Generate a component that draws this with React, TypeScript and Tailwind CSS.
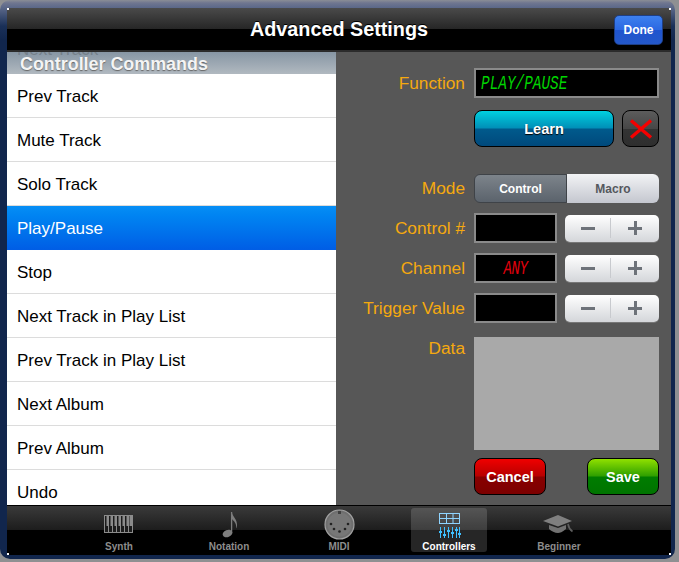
const commands = [
  "Prev Track",
  "Mute Track",
  "Solo Track",
  "Play/Pause",
  "Stop",
  "Next Track in Play List",
  "Prev Track in Play List",
  "Next Album",
  "Prev Album",
  "Undo",
];

const sans = "font-['Liberation_Sans',Arial,sans-serif]";
const lcd = "font-['Liberation_Mono',monospace]";

const Label = ({ children }: { children: string }) => (
  <div className="w-[129px] shrink-0 text-right text-[17.3px] leading-none text-[#f5a90f]">
    {children}
  </div>
);

const Stepper = () => (
  <div className="ml-2 flex h-[27px] w-[94px] items-center rounded-[5px] bg-gradient-to-b from-white to-[#d4d6da] shadow-[0_1px_0_#777]">
    <div className="flex h-[20px] w-[46px] items-center justify-center border-r border-[#c8cace]">
      <div className="h-[3px] w-[14px] bg-[#6d7279]" />
    </div>
    <div className="relative flex h-[20px] flex-1 items-center justify-center">
      <div className="h-[3px] w-[14px] bg-[#6d7279]" />
      <div className="absolute h-[14px] w-[3px] bg-[#6d7279]" />
    </div>
  </div>
);

const NumberRow = ({ label, value }: { label: string; value?: string }) => (
  <div className="flex h-[30px] items-center">
    <div className="pt-[2px]">
      <Label>{label}</Label>
    </div>
    <div className="ml-[9px] flex h-[30px] w-[83px] items-center justify-center border-2 border-[#8a8a8a] bg-black">
      {value && (
        <span
          className={`${lcd} inline-block scale-y-[1.45] text-[14px] italic tracking-[-0.4px] text-[#e0000c]`}
        >
          {value}
        </span>
      )}
    </div>
    <Stepper />
  </div>
);

const KeyboardIcon = () => (
  <svg width="30" height="20" viewBox="0 0 30 20" fill="none">
    <rect x="0.5" y="0.5" width="28" height="17" fill="#1c1c1c" stroke="#8b8b8b" />
    {[4, 8, 12, 16, 20, 24].map((x) => (
      <line key={x} x1={x + 0.5} y1="11" x2={x + 0.5} y2="18" stroke="#8b8b8b" />
    ))}
    {[2, 6, 10, 14, 18, 22, 25].map((x) => (
      <rect key={x} x={x + 0.5} y="1" width="2.5" height="10" fill="#8b8b8b" />
    ))}
  </svg>
);

const NoteIcon = () => (
  <svg width="18" height="27" viewBox="-2 0 18 27" fill="none">
    <ellipse cx="5.5" cy="22.5" rx="5" ry="3.6" transform="rotate(-22 5.5 22.5)" fill="#7d7d7d" />
    <path d="M9.6 22V1" stroke="#7d7d7d" strokeWidth="1.3" />
    <path d="M9.8 1C10.5 6 15.5 8 15 15C14.9 16 14.6 17 14.2 17.6C14.8 12.5 12 10 9.8 8Z" fill="#7d7d7d" />
  </svg>
);

const MidiIcon = () => (
  <svg width="31" height="31" viewBox="0 0 31 31" fill="none">
    <circle cx="15.5" cy="15.5" r="14.5" fill="#6f6f6f" stroke="#a2a2a2" strokeWidth="1.2" />
    <circle cx="15.5" cy="15.5" r="12" fill="#777" />
    <rect x="14" y="2" width="3" height="3" fill="#3f3f3f" />
    {[
      [7, 15],
      [10, 20],
      [15.5, 22.5],
      [21, 20],
      [24, 15],
    ].map(([cx, cy]) => (
      <circle key={cx} cx={cx} cy={cy} r="1.3" fill="#222" />
    ))}
  </svg>
);

const ControllersIcon = () => (
  <svg width="23" height="26" viewBox="0 0 23 26" fill="none">
    <g stroke="#8fd4ff">
      <rect x="1.5" y="1.5" width="20" height="10" />
      <path d="M8.5 1.5V11.5M15 1.5V11.5M1.5 6.5H21.5" />
    </g>
    <g stroke="#3fc0ff" strokeWidth="1">
      {[2.5, 6.5, 10.5, 14.5, 18.5, 21.5].map((x) => (
        <line key={x} x1={x} y1="15" x2={x} y2="26" />
      ))}
    </g>
    <g fill="#3fc0ff">
      {[
        [2.5, 19],
        [6.5, 22],
        [10.5, 18],
        [14.5, 20],
        [18.5, 17],
        [21.5, 21],
      ].map(([x, y]) => (
        <rect key={x} x={x - 1.5} y={y} width="3" height="2" />
      ))}
    </g>
  </svg>
);

const CapIcon = () => (
  <svg width="32" height="19" viewBox="0 0 32 19" fill="none">
    <path d="M15 0L29 6L15 11.5L0 6Z" fill="#7f7f7f" />
    <path d="M6 10L15 13L23 10V14C19 17 17 18 15 18C12 18 8 16 6 14Z" fill="#727272" />
    <path d="M25 9C25.5 12 26 14 29.5 16.5" stroke="#5e5e5e" strokeWidth="1.6" />
  </svg>
);

const tabs = [
  { name: "Synth", icon: <KeyboardIcon /> },
  { name: "Notation", icon: <NoteIcon /> },
  { name: "MIDI", icon: <MidiIcon /> },
  { name: "Controllers", icon: <ControllersIcon />, active: true },
  { name: "Beginner", icon: <CapIcon /> },
];

export default function App() {
  return (
    <div className={`${sans} h-[562px] w-[679px] overflow-hidden bg-[#8f9092]`}>
      <div className="h-[559px] w-[675px] rounded-[10px] bg-[linear-gradient(#8a8d95,#6f7690_3px,#5a6788_8px,#1a3058_26px,#11264d_40px)] pb-[4px] pl-[7px] pr-[4px] pt-[8px]">
        <div className="relative flex h-full flex-col">
          {/* little white corner marks of the popover */}
          <div className="absolute left-0 top-0 z-10 h-[2px] w-[2px] bg-white" />
          <div className="absolute right-0 top-0 z-10 h-[2px] w-[2px] bg-white" />
          <div className="absolute bottom-0 left-0 z-10 h-[2px] w-[2px] bg-white" />
          <div className="absolute bottom-0 right-0 z-10 h-[2px] w-[2px] bg-white" />

          {/* title bar */}
          <div className="relative flex h-[44px] shrink-0 items-center justify-center border-b-2 border-[#2b2b2b] bg-[linear-gradient(#4a4a4a,#262626_50%,#000_50%,#000)] pt-[2px]">
            <h1 className="text-[19.8px] font-bold text-white [text-shadow:0_-1px_0_#000]">
              Advanced Settings
            </h1>
            <button className="absolute right-[8px] top-[7px] flex h-[30px] w-[49px] items-center justify-center rounded-[5px] border border-[#1e3f86] bg-[linear-gradient(#3d80ee,#2b68e2_50%,#1f54cf_50%,#2458c9)] text-[12px] font-bold text-white">
              Done
            </button>
          </div>

          <div className="flex min-h-0 flex-1">
            {/* command list */}
            <div className="w-[329px] shrink-0 bg-white">
              <div className="relative h-[22px] overflow-hidden bg-gradient-to-b from-[#8796a4] to-[#b1b9c0] pl-[13px] text-[17.9px] font-bold leading-[25px] text-[#f4f4f4] [text-shadow:0_1px_1px_#666]">
                <span className="absolute left-[10px] top-[-15px] text-[17px] font-normal text-[#75808a] [text-shadow:none]">
                  Next Track
                </span>
                <span className="relative">Controller Commands</span>
              </div>
              {commands.map((c) =>
                c === "Play/Pause" ? (
                  <div
                    key={c}
                    className="flex h-[44px] items-center bg-gradient-to-b from-[#068ef5] to-[#015de5] pl-[10px] pt-[2px] text-[17px] text-white"
                  >
                    {c}
                  </div>
                ) : (
                  <div
                    key={c}
                    className="flex h-[44px] items-center border-b border-[#dcdcdc] pl-[10px] pt-[3px] text-[17px] text-black"
                  >
                    {c}
                  </div>
                ),
              )}
            </div>

            {/* detail panel */}
            <div className="flex-1 bg-[#575757] pt-[16px]">
              <div className="flex h-[30px] items-center">
                <div className="pt-[2px]">
                  <Label>Function</Label>
                </div>
                <div className="ml-[9px] flex h-[30px] w-[185px] items-center border-2 border-[#8a8a8a] bg-black pl-[5px] pt-[3px]">
                  <span
                    className={`${lcd} inline-block scale-y-[1.45] text-[14.4px] italic text-[#00d400]`}
                  >
                    PLAY/PAUSE
                  </span>
                </div>
              </div>
              <div className="ml-[138px] mt-[12px] flex h-[37px] w-[185px] justify-between">
                <button className="w-[140px] rounded-[8px] border border-black bg-[linear-gradient(#00d0e0,#0090b8_48%,#005a8c_52%,#00497c)] pt-[2px] text-[14.5px] font-bold text-white [text-shadow:0_1px_1px_#000]">
                  Learn
                </button>
                <button className="flex w-[37px] items-center justify-center rounded-[8px] border border-black bg-[linear-gradient(#5c5c5c,#474747_50%,#343434_50%,#2e2e2e)]">
                  <svg width="24" height="20" viewBox="0 0 24 20" fill="none">
                    <path d="M2 1.5L22 18.5M22 1.5L2 18.5" stroke="#f50000" strokeWidth="3.4" />
                  </svg>
                </button>
              </div>

              <div className="mt-[27px] flex h-[29px] items-center">
                <Label>Mode</Label>
                <div className="ml-[9px] flex h-[29px] w-[185px] text-[12px] font-bold">
                  <div className="flex w-[93px] items-center justify-center rounded-l-[6px] border border-[#3f4348] bg-gradient-to-b from-[#7d848b] to-[#5b636c] text-white">
                    Control
                  </div>
                  <div className="flex flex-1 items-center justify-center rounded-r-[6px] bg-gradient-to-b from-[#f2f3f5] to-[#c4c7cf] text-[#55585d]">
                    Macro
                  </div>
                </div>
              </div>

              <div className="mt-[10px] flex flex-col gap-[10px]">
                <NumberRow label="Control #" />
                <NumberRow label="Channel" value="ANY" />
                <NumberRow label="Trigger Value" />
              </div>

              <div className="mt-[14px] flex">
                <div className="flex h-[113px] w-[129px] justify-end text-[17.3px] leading-[22px] text-[#f5a90f]">
                  Data
                </div>
                <div className="ml-[9px] h-[113px] w-[185px] bg-[#a9a9a9]" />
              </div>

              <div className="ml-[138px] mt-[8px] flex h-[37px] w-[185px] justify-between text-[14.5px] font-bold text-white [text-shadow:0_1px_1px_#000]">
                <button className="w-[72px] rounded-[8px] border border-black bg-[linear-gradient(#f00000,#b80000_48%,#880000_52%,#7c0000)] pt-[2px]">
                  Cancel
                </button>
                <button className="w-[72px] rounded-[8px] border border-black bg-[linear-gradient(#90e000,#30a000_48%,#007c00_52%,#007400)] pt-[2px]">
                  Save
                </button>
              </div>
            </div>
          </div>

          {/* tab bar */}
          <div className="flex h-[50px] shrink-0 justify-center border-t border-black bg-[linear-gradient(#3a3a3a,#1c1c1c_50%,#000_50%,#000)]">
            {tabs.map((t) => (
              <div key={t.name} className="flex w-[110px] justify-center pb-[3px] pt-[2px]">
                <div
                  className={`flex w-[76px] flex-col items-center rounded-[3px] ${
                    t.active ? "bg-white/15" : ""
                  }`}
                >
                  <div className="flex h-[33px] items-center justify-center">{t.icon}</div>
                  <span
                    className={`text-[10px] font-bold leading-[11px] ${
                      t.active ? "text-white" : "text-[#8d8d8d]"
                    }`}
                  >
                    {t.name}
                  </span>
                </div>
              </div>
            ))}
          </div>
        </div>
      </div>
    </div>
  );
}
